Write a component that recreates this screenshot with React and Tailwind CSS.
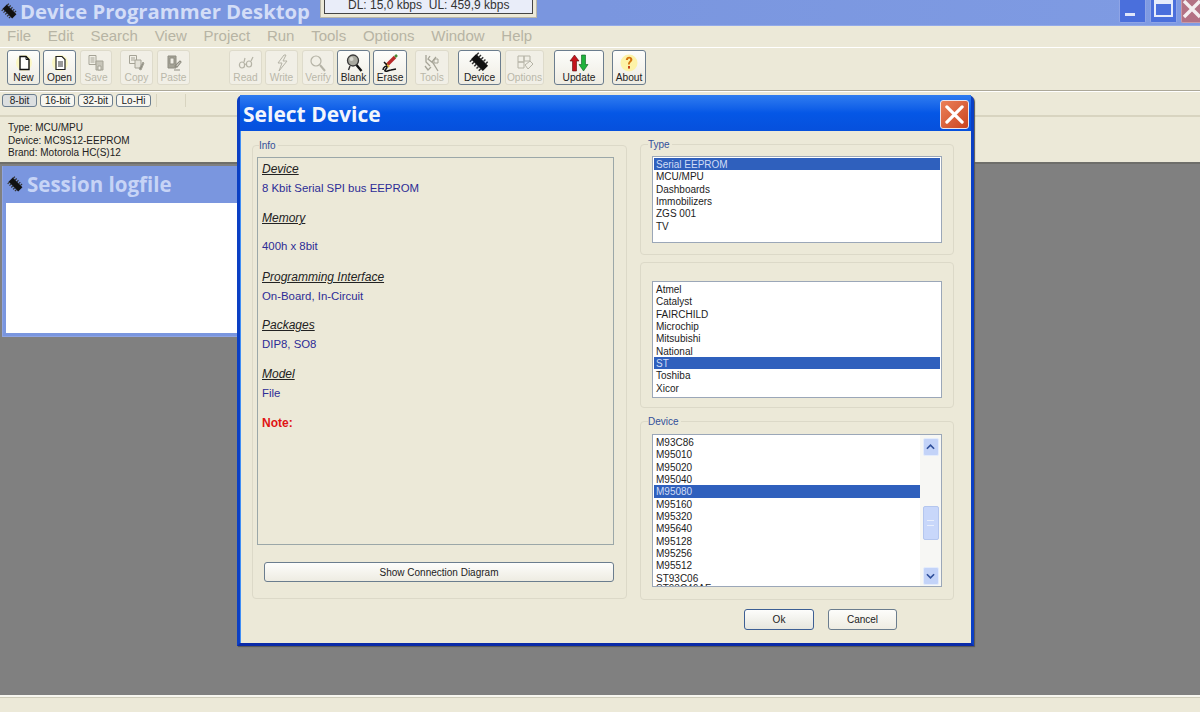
import React from 'react';

const Chip = ({ className }) => (
  <svg viewBox="0 0 20 20" className={`shrink-0 ${className}`}>
    <g transform="rotate(45 10 10)">
      <rect x="2" y="6.5" width="16" height="7" fill="#111" />
      <path d="M3 4v3M6 4v3M9 4v3M12 4v3M15 4v3M3 13v3M6 13v3M9 13v3M12 13v3M15 13v3" stroke="#333" strokeWidth="1.4" />
    </g>
  </svg>
);

const icons = {
  new: (
    <svg viewBox="0 0 18 18" className="w-[18px] h-[18px]">
      <circle cx="9" cy="9" r="8" fill="#fbf7c4" />
      <path d="M5 2.5h6l3 3v10H5z" fill="#fff" stroke="#111" strokeWidth="1.4" />
      <path d="M11 2.5v3h3" fill="none" stroke="#111" />
    </svg>
  ),
  open: (
    <svg viewBox="0 0 18 18" className="w-[18px] h-[18px]">
      <circle cx="9" cy="9" r="8" fill="#fbf7c4" />
      <path d="M5 2.5h6l3 3v10H5z" fill="#fff" stroke="#222" strokeWidth="1.2" />
      <path d="M7 8h5M7 10h5M7 12h5" stroke="#333" />
    </svg>
  ),
  save: (
    <svg viewBox="0 0 18 18" className="w-[18px] h-[18px]" fill="none" stroke="#a5a396">
      <path d="M2 1.5h7v9H2z" />
      <path d="M3.5 4h4M3.5 6h4M3.5 8h4" />
      <path d="M9 7h7v9H9z" fill="#c8c6ba" />
      <path d="M11 12h3v4h-3z" fill="#f1efe6" />
    </svg>
  ),
  copy: (
    <svg viewBox="0 0 18 18" className="w-[18px] h-[18px]" fill="none" stroke="#a5a396">
      <path d="M1.5 1.5h7v8h-7z" />
      <path d="M3 4h4M3 6h4" />
      <path d="M7 6h6v8H7z" fill="#e4e2d8" />
      <path d="M11 15l4-7 1 1-3 7z" fill="#8f8d82" />
    </svg>
  ),
  paste: (
    <svg viewBox="0 0 18 18" className="w-[18px] h-[18px]" fill="none" stroke="#8f8d82">
      <path d="M3 2h8v12H3z" fill="#a5a396" />
      <path d="M5 4h4v6H5z" fill="#f1efe6" />
      <path d="M10 12l5-5 1 1-4 5zM9 16h6" strokeWidth="1.2" />
    </svg>
  ),
  read: (
    <svg viewBox="0 0 18 18" className="w-[18px] h-[18px]" fill="none" stroke="#b5b3a6" strokeWidth="1.2">
      <ellipse cx="5" cy="11" rx="2.6" ry="3" />
      <ellipse cx="12" cy="10" rx="2.6" ry="3" />
      <path d="M7.5 10.5l2-.5M7 8l1-4M14 7l2-4" />
    </svg>
  ),
  write: (
    <svg viewBox="0 0 18 18" className="w-[18px] h-[18px]" fill="none" stroke="#b5b3a6">
      <path d="M11 1L5 9h4l-3 8 8-10h-4l3-6z" />
    </svg>
  ),
  verify: (
    <svg viewBox="0 0 18 18" className="w-[18px] h-[18px]" fill="none" stroke="#b5b3a6">
      <circle cx="7" cy="7" r="5" strokeWidth="1.2" />
      <path d="M11 11l5 6" strokeWidth="2" />
    </svg>
  ),
  blank: (
    <svg viewBox="0 0 18 18" className="w-[18px] h-[18px]">
      <circle cx="8" cy="6.5" r="5.5" fill="#a9a9a0" stroke="#3a3a3a" strokeWidth="1.3" />
      <circle cx="6.5" cy="5" r="2" fill="#d6d6cf" />
      <path d="M11.5 11l5 6" stroke="#111" strokeWidth="2.4" />
      <path d="M5 12l-1.5 4" stroke="#333" strokeWidth="1.4" />
    </svg>
  ),
  erase: (
    <svg viewBox="0 0 18 18" className="w-[18px] h-[18px]" fill="none">
      <path d="M6 11l8-8" stroke="#b92a2a" strokeWidth="3.4" />
      <path d="M14 3l2-2" stroke="#4a8a35" strokeWidth="2.5" />
      <path d="M5 10l3 3" stroke="#e0b63c" strokeWidth="2.4" />
      <path d="M2 16c0-3 4-5 4-3s-3 3-2 4 4-1 6-1l5-1M3 8l3 3" stroke="#111" strokeWidth="1.5" />
    </svg>
  ),
  tools: (
    <svg viewBox="0 0 18 18" className="w-[18px] h-[18px]" fill="none" stroke="#a5a396">
      <path d="M3 1v7l4 4M7 2l-2 3 5 4 5 8M13 3l-4 5M2 12l3 4 3-3" strokeWidth="1.3" />
      <path d="M11 5h4v4h-4z" />
    </svg>
  ),
  options: (
    <svg viewBox="0 0 18 18" className="w-[18px] h-[18px]" fill="none" stroke="#b5b3a6">
      <path d="M2 2h6v6H2zM8 2h6v5H8zM2 8h6v6H2z" />
      <path d="M9 11l5-4 3 3-5 5z" fill="#f1efe6" />
    </svg>
  ),
  update: (
    <svg viewBox="0 0 20 18" className="w-[20px] h-[18px]">
      <path d="M5.5 1L10 7H7.5v10h-4V7H1z" fill="#c4141c" stroke="#5a0a0a" strokeWidth=".6" />
      <path d="M14.5 17L10 10.5h2.5V1h4v9.5H19z" fill="#1fb33c" stroke="#0d5c1b" strokeWidth=".6" />
    </svg>
  ),
  about: (
    <svg viewBox="0 0 18 18" className="w-[18px] h-[18px]">
      <circle cx="9" cy="9" r="8.5" fill="#fdf3a8" />
      <path d="M5.8 6c0-4.4 6.6-4.4 6.6-.4 0 2.6-2.6 2.6-2.6 5H8c0-3.2 2.2-3 2.2-5 0-1.6-2.2-1.6-2.2.4z" fill="#d4740f" />
      <rect x="8" y="12" width="2" height="2.6" fill="#c9451a" />
    </svg>
  ),
  device: <Chip className="w-[21px] h-[21px] -my-[1px]" />,
};

const toolbar = [
  { label: 'New', icon: 'new', cls: 'ml-[7px] w-[33px]' },
  { label: 'Open', icon: 'open', cls: 'ml-[3px] w-[33px]' },
  { label: 'Save', icon: 'save', off: true, cls: 'ml-[4px] w-[32px]' },
  { label: 'Copy', icon: 'copy', off: true, cls: 'ml-[8px] w-[33px]' },
  { label: 'Paste', icon: 'paste', off: true, cls: 'ml-[4px] w-[33px]' },
  { label: 'Read', icon: 'read', off: true, cls: 'ml-[39px] w-[33px]' },
  { label: 'Write', icon: 'write', off: true, cls: 'ml-[3px] w-[33px]' },
  { label: 'Verify', icon: 'verify', off: true, cls: 'ml-[4px] w-[32px]' },
  { label: 'Blank', icon: 'blank', cls: 'ml-[3px] w-[33px]' },
  { label: 'Erase', icon: 'erase', cls: 'ml-[3px] w-[34px]' },
  { label: 'Tools', icon: 'tools', off: true, cls: 'ml-[8px] w-[34px]' },
  { label: 'Device', icon: 'device', cls: 'ml-[9px] w-[43px]' },
  { label: 'Options', icon: 'options', off: true, cls: 'ml-[4px] w-[39px]' },
  { label: 'Update', icon: 'update', cls: 'ml-[10px] w-[50px]' },
  { label: 'About', icon: 'about', cls: 'ml-[8px] w-[34px]' },
];

const menu = ['File', 'Edit', 'Search', 'View', 'Project', 'Run', 'Tools', 'Options', 'Window', 'Help'];

const infoRows = [
  { text: 'Device', head: true, cls: 'mt-[4px]' },
  { text: '8 Kbit Serial SPI bus EEPROM', cls: 'mt-[5px]' },
  { text: 'Memory', head: true, cls: 'mt-[16px]' },
  { text: '400h x 8bit', cls: 'mt-[14px]' },
  { text: 'Programming Interface', head: true, cls: 'mt-[17px]' },
  { text: 'On-Board, In-Circuit', cls: 'mt-[5px]' },
  { text: 'Packages', head: true, cls: 'mt-[15px]' },
  { text: 'DIP8, SO8', cls: 'mt-[5px]' },
  { text: 'Model', head: true, cls: 'mt-[16px]' },
  { text: 'File', cls: 'mt-[5px]' },
];

const ListRow = ({ children, on }) => (
  <div className={`h-[12.33px] leading-[13.5px] pl-[2px] text-[10px] whitespace-nowrap ${on ? 'bg-[#2f60bd] text-[#cfdcf5]' : 'text-[#1c1c1c]'}`}>
    {children}
  </div>
);

const Legend = ({ children, cls }) => (
  <legend className={`${cls} h-[12px] leading-[13px] pr-[2px] text-[10px] text-[#33509a]`}>{children}</legend>
);

const ScrollBtn = ({ up }) => (
  <div className="w-[16px] h-[18px] rounded-[2px] bg-[#c3d3f8] border border-[#e4ecfc] flex items-center justify-center">
    <svg viewBox="0 0 10 6" className="w-[9px] h-[6px]" fill="none" stroke="#2f4f9a" strokeWidth="1.8">
      <path d={up ? 'M1 5l4-4 4 4' : 'M1 1l4 4 4-4'} />
    </svg>
  </div>
);

const App = () => {
  return (
    <div className="relative w-[1200px] h-[712px] overflow-hidden flex flex-col bg-[#ece9d8] font-['Liberation_Sans',sans-serif]">
      {/* title bar */}
      <div className="h-[26px] shrink-0 flex bg-linear-to-r from-[#7a96df] via-[#7a96df] to-[#7f9be3] border-b border-[#93aae8]">
        <div className="w-[320px] shrink-0 flex items-center pl-[1px] -mt-[3px]">
          <Chip className="w-[17px] h-[17px]" />
          <span className="ml-[2px] font-['Open_Sans',sans-serif] font-bold text-[20.3px] leading-[24px] text-[#d3ddf7] whitespace-nowrap">Device Programmer Desktop</span>
        </div>
        <div className="w-[217px] h-[18px] shrink-0 bg-[#ece9d8] border border-[#b9b7aa] border-t-0 pl-[3px] pr-[3px] pb-[3px]">
          <div className="h-full bg-[#e9edf9] border border-[#444] border-t-0 pl-[23px] text-[12px] leading-[11px] text-[#333] whitespace-nowrap">DL: 15,0 kbps &nbsp;UL: 459,9 kbps</div>
        </div>
        <div className="ml-auto flex items-start gap-[4px]">
          <div className="w-[27px] h-[23px] rounded-b-[2px] bg-[#4a6fdc] border border-[#8fa5e6] border-t-0 relative">
            <div className="absolute left-[5px] top-[13px] w-[10px] h-[3px] bg-[#dfe6fa]" />
          </div>
          <div className="w-[27px] h-[23px] rounded-b-[2px] bg-[#4a6fdc] border border-[#8fa5e6] border-t-0 flex justify-center">
            <div className="w-[19px] h-[18px] border-[2px] border-t-[5px] border-[#e6ecfb] -mt-[1px]" />
          </div>
          <div className="w-[19px] h-[23px] rounded-bl-[2px] bg-[#b37184] border-l border-b border-[#c79aa8] overflow-hidden">
            <svg viewBox="0 0 19 23" className="w-[19px] h-[23px]" stroke="#f4eef0" strokeWidth="3.4">
              <path d="M2 1l16 16M18 1L2 17" />
            </svg>
          </div>
        </div>
      </div>

      {/* menu */}
      <div className="h-[21px] shrink-0 flex items-center gap-[16.7px] pl-[7px] text-[15px] text-[#b7b4a4] border-b border-white box-content">
        {menu.map((m) => (
          <span key={m}>{m}</span>
        ))}
      </div>

      {/* main toolbar */}
      <div className="h-[43px] shrink-0 flex items-start pt-[2px] border-b border-[#aca899]">
        {toolbar.map((b) => (
          <div
            key={b.label}
            className={`${b.cls} h-[35px] shrink-0 rounded-[3px] border flex flex-col items-center pt-[2px] ${b.off ? 'border-[#dedbcb] bg-[#f1efe6]' : 'border-[#6b7d8e] bg-linear-to-b from-[#fdfdfb] to-[#eeece2]'}`}
          >
            <div className="h-[19px] flex items-center">{icons[b.icon]}</div>
            <span className={`text-[10.2px] leading-[12px] ${b.off ? 'text-[#b9b7a9]' : 'text-[#222]'}`}>{b.label}</span>
          </div>
        ))}
      </div>

      {/* width toolbar */}
      <div className="h-[21px] shrink-0 flex items-start pt-[2px] pl-[2px] gap-[3px] border-t border-white border-b-2 border-b-[#d8d4c0] box-content">
        {['8-bit', '16-bit', '32-bit', 'Lo-Hi'].map((t, i) => (
          <div
            key={t}
            className={`w-[35px] h-[13px] rounded-[3px] border border-[#6b7d8e] flex items-center justify-center text-[10px] text-[#222] ${i === 0 ? 'bg-[#dcdfe0]' : 'bg-[#f7f6f0]'}`}
          >
            {t}
          </div>
        ))}
        <div className="ml-[2px] w-px h-[13px] bg-[#d8d4c0]" />
        <div className="ml-[25px] w-px h-[13px] bg-[#d8d4c0]" />
      </div>

      {/* current device */}
      <div className="h-[45px] shrink-0 pl-[8px] pt-[5px] text-[10px] leading-[12.5px] text-[#222]">
        <div>Type: MCU/MPU</div>
        <div>Device: MC9S12-EEPROM</div>
        <div>Brand: Motorola HC(S)12</div>
      </div>

      {/* workspace */}
      <div className="relative flex-1 bg-[#808080] border-t-2 border-[#6e6e6a]">
        <div className="absolute left-[2px] top-[2px] w-[240px] h-[171px] flex flex-col bg-[#7a96df] border-l border-b border-[#8ea4e4]">
          <div className="h-[37px] shrink-0 flex items-center pl-[4px]">
            <Chip className="w-[17px] h-[17px]" />
            <span className="ml-[3px] font-['Open_Sans',sans-serif] font-bold text-[20.5px] text-[#c7d4f6] whitespace-nowrap">Session logfile</span>
          </div>
          <div className="flex-1 mx-[3px] mb-[3px] bg-white" />
        </div>
      </div>

      {/* status bar */}
      <div className="h-[17px] shrink-0 border-t-2 border-[#f7f6ef] shadow-[inset_0_1px_0_#cfccba] bg-[#ece9d8]" />

      {/* dialog */}
      <div className="absolute left-[237px] top-[95px] w-[737px] h-[551px] flex flex-col rounded-t-[6px] bg-[#0a52e0] border-[3px] border-t-0 border-[#0b3fc4] border-b-[#0a2aa8] shadow-[1px_1px_1px_#555]">
        <div className="h-[36px] shrink-0 flex items-center justify-between pl-[3px] pr-[2px] bg-linear-to-b from-[#2f7cf0] via-[#0557e6] to-[#0650dc]">
          <span className="font-['Open_Sans',sans-serif] font-bold text-[21px] mt-[3px] text-[#f2f5fc] whitespace-nowrap">Select Device</span>
          <div className="w-[29px] h-[29px] mt-[2px] rounded-[3px] bg-linear-to-br from-[#ec8058] to-[#c8431f] border border-[#e8e4ef] flex items-center justify-center">
            <svg viewBox="0 0 20 20" className="w-[19px] h-[19px]" stroke="#fff" strokeWidth="3.4" strokeLinecap="round">
              <path d="M2 2l16 16M18 2L2 18" />
            </svg>
          </div>
        </div>
        <div className="flex-1 flex bg-[#ece9d8] pl-[11px] border-l border-[#3f8df5]">
          {/* info */}
          <div className="w-[375px] shrink-0 pt-[8px]">
            <fieldset className="h-[460px] rounded-[4px] border border-[#dcd9c8] pl-[4px] pr-[12px]">
              <Legend cls="ml-[2px]">Info</Legend>
              <div className="h-[388px] mt-[6px] border border-[#9ba7a8] pl-[4px]">
                {infoRows.map((r) => (
                  <div
                    key={r.text}
                    className={`${r.cls} h-[14px] leading-[14px] whitespace-nowrap ${r.head ? 'italic underline text-[12px] text-[#222]' : 'text-[11.4px] text-[#2c2c96]'}`}
                  >
                    {r.text}
                  </div>
                ))}
                <div className="mt-[16px] h-[14px] leading-[14px] text-[12px] font-bold text-[#e01414]">Note:</div>
              </div>
              <div className="mt-[17px] ml-[7px] h-[20px] rounded-[3px] border border-[#6b7d8e] bg-linear-to-b from-[#fdfdfb] to-[#eeece2] flex items-center justify-center text-[10px] text-[#222]">
                Show Connection Diagram
              </div>
            </fieldset>
          </div>

          {/* lists */}
          <div className="w-[314px] ml-[13px] shrink-0 pt-[7px] flex flex-col gap-[7px]">
            <fieldset className="h-[117px] rounded-[4px] border border-[#dcd9c8] px-[11px]">
              <Legend cls="-ml-[4px]">Type</Legend>
              <div className="h-[87px] mt-[6px] bg-white border border-[#9ba7b8] p-[1px]">
                <ListRow on>Serial EEPROM</ListRow>
                <ListRow>MCU/MPU</ListRow>
                <ListRow>Dashboards</ListRow>
                <ListRow>Immobilizers</ListRow>
                <ListRow>ZGS 001</ListRow>
                <ListRow>TV</ListRow>
              </div>
            </fieldset>
            <div className="h-[146px] rounded-[4px] border border-[#dcd9c8] px-[11px] pt-[18px]">
              <div className="h-[117px] bg-white border border-[#9ba7b8] p-[1px]">
                <ListRow>Atmel</ListRow>
                <ListRow>Catalyst</ListRow>
                <ListRow>FAIRCHILD</ListRow>
                <ListRow>Microchip</ListRow>
                <ListRow>Mitsubishi</ListRow>
                <ListRow>National</ListRow>
                <ListRow on>ST</ListRow>
                <ListRow>Toshiba</ListRow>
                <ListRow>Xicor</ListRow>
              </div>
            </div>
            <fieldset className="h-[185px] rounded-[4px] border border-[#dcd9c8] px-[11px]">
              <Legend cls="-ml-[4px]">Device</Legend>
              <div className="h-[153px] mt-[7px] bg-white border border-[#9ba7b8] flex overflow-hidden">
                <div className="flex-1 pl-[1px] pt-[1px] overflow-hidden">
                  {['M93C86', 'M95010', 'M95020', 'M95040', 'M95080', 'M95160', 'M95320', 'M95640', 'M95128', 'M95256', 'M95512', 'ST93C06'].map((d) => (
                    <ListRow key={d} on={d === 'M95080'}>{d}</ListRow>
                  ))}
                  <div className="-mt-[2px]"><ListRow>ST93C46AF</ListRow></div>
                </div>
                <div className="w-[21px] shrink-0 flex flex-col items-center pt-[3px] bg-[#f7f7f4]">
                  <ScrollBtn up />
                  <div className="mt-[50px] w-[16px] h-[34px] rounded-[2px] bg-[#c8d7fa] border border-[#b4c6ee] flex items-center justify-center">
                    <div className="w-[7px] h-[6px] border-y border-[#e8eefc]" />
                  </div>
                  <div className="flex-1" />
                  <div className="mb-[1px]"><ScrollBtn /></div>
                </div>
              </div>
            </fieldset>
            <div className="flex justify-end gap-[14px] mt-[2px] pr-[57px]">
              <div className="w-[70px] h-[21px] rounded-[3px] border-[1.5px] border-[#3d5f94] bg-linear-to-b from-[#fdfdfb] to-[#e6e6de] flex items-center justify-center text-[10px] text-[#222]">Ok</div>
              <div className="w-[69px] h-[21px] rounded-[3px] border border-[#6b7d8e] bg-linear-to-b from-[#fdfdfb] to-[#eeece2] flex items-center justify-center text-[10px] text-[#222]">Cancel</div>
            </div>
          </div>
        </div>
      </div>
    </div>
  );
};

export default App;
